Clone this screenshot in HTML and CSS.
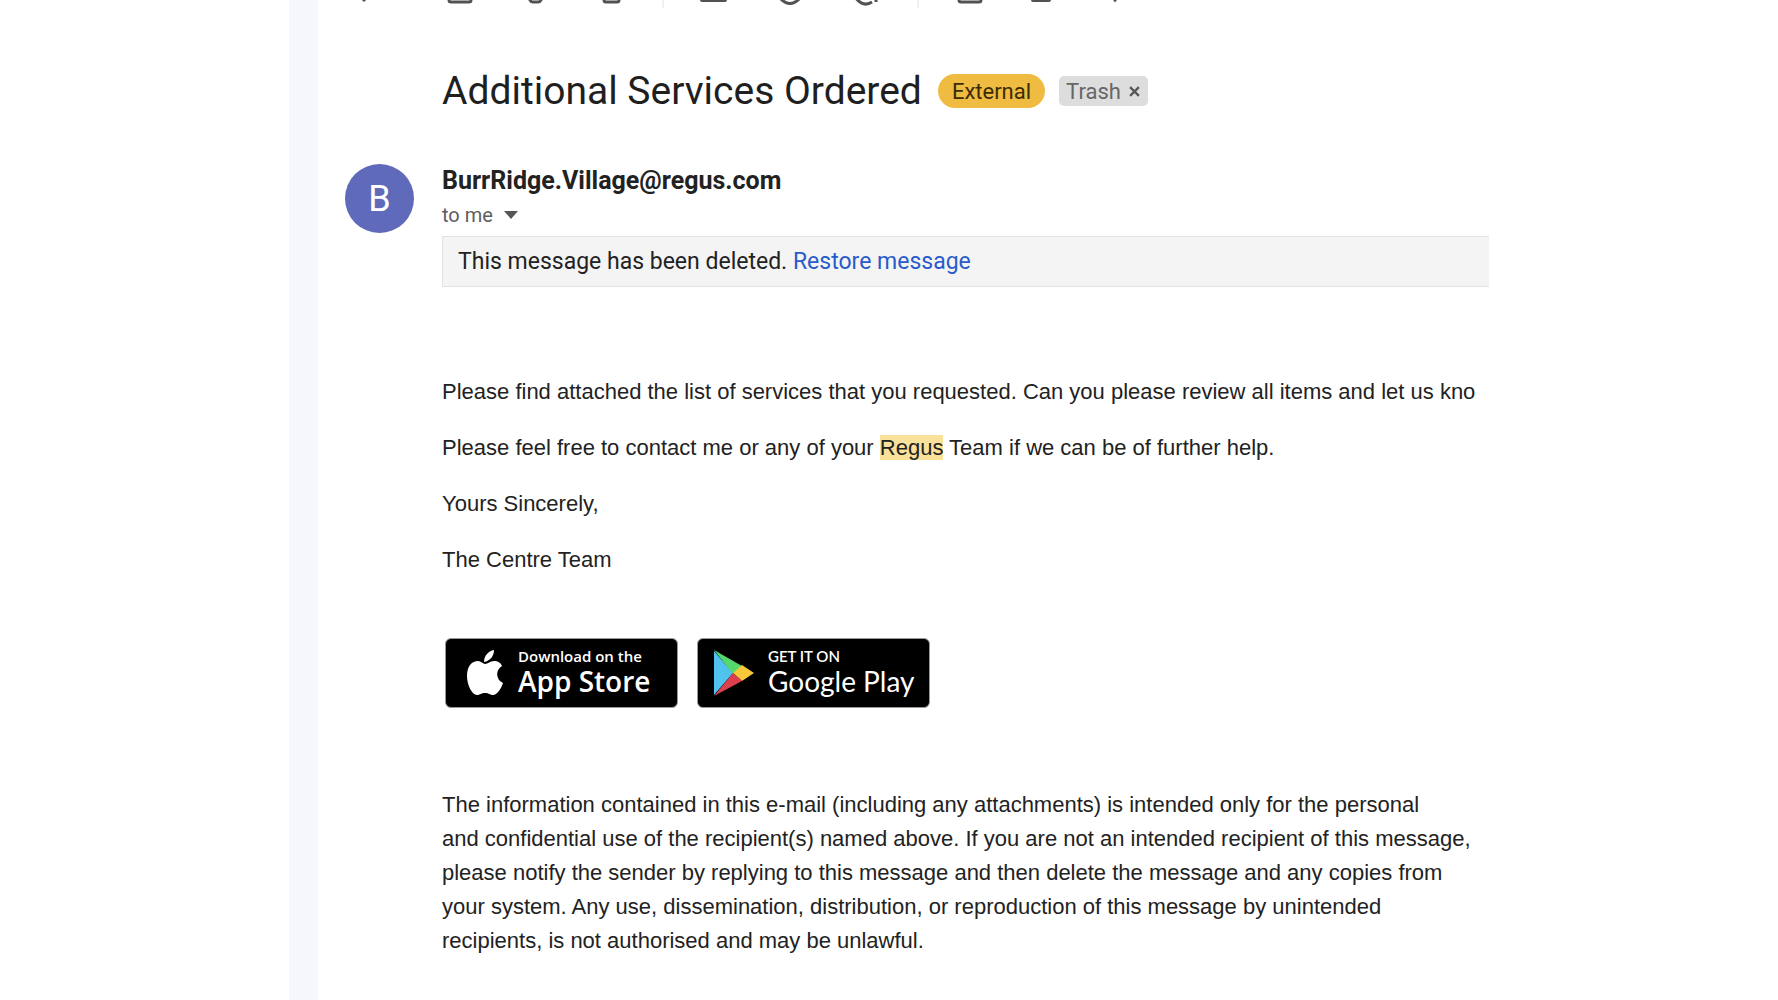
FILE: index.html
```html
<!DOCTYPE html>
<html lang="en">
<head>
  <meta charset="UTF-8" />
  <meta name="viewport" content="width=device-width, initial-scale=1.0">
  <title>Additional Services Ordered</title>
  <link rel="stylesheet" href="styles.css">
</head>
<body>

  <main class="mail">

    <!-- toolbar, scrolled almost out of view -->
    <svg class="toolbar" width="800" height="10" viewBox="0 0 800 10" aria-hidden="true">
      <g fill="none" stroke="#505254" stroke-width="3">
        <path d="M16 -3l3 3l3 -3" />
        <path d="M104 -4v4q0 2 2 2h18q2 0 2-2v-4" />
        <path d="M183 -4l2 4q1 2 3 2h5q2 0 3-2l2-4" />
        <path d="M259 -4v4q0 2 2 2h11q2 0 2-2v-4" />
        <path d="M434 -3q11 13 22 0" />
        <path d="M510 -3q8 11 17 5M531 -4v6" />
        <path d="M614 -4v4q0 2 2 2h18q2 0 2-2v-4" />
        <path d="M767 -4l3 4l3 -4" />
      </g>
      <path d="M355 -2h27v2q0 2-2 2h-23q-2 0-2-2zM686 -2h20v2q0 2-2 2h-16q-2 0-2-2z" fill="#505254" />
      <path d="M318 0v8M573 0v8" stroke="#eff0f2" stroke-width="2" />
    </svg>

    <header class="subject">
      <h1>Additional Services Ordered</h1>
      <span class="tag external">External</span>
      <span class="tag trash">Trash
        <button type="button" aria-label="Remove label Trash">
          <svg width="11" height="11" viewBox="0 0 10 10"><path d="M1 1l8 8M9 1l-8 8" stroke="#555" stroke-width="2" /></svg>
        </button>
      </span>
    </header>

    <section class="sender">
      <div class="avatar">B</div>
      <div class="details">
        <h2>BurrRidge.Village@regus.com</h2>
        <button type="button" class="to">to me
          <svg width="14" height="8" viewBox="0 0 14 8"><path d="M0 0h14l-7 8z" fill="#555" /></svg>
        </button>
        <div class="notice">This message has been deleted. <a href="#">Restore message</a></div>
      </div>
    </section>

    <article class="message">
      <p class="cut">Please find attached the list of services that you requested. Can you please review all items and let us kno</p>
      <p>Please feel free to contact me or any of your <mark>Regus</mark> Team if we can be of further help.</p>
      <p>Yours Sincerely,</p>
      <p>The Centre Team</p>

      <div class="stores">
        <a href="#" class="store apple">
          <svg width="38" height="46" viewBox="0 0 38 46" fill="#fff">
            <path d="M18 12C18 6 22 1 28 0C28 6 24 11 18 12Z" />
            <path d="M19 14C22 14 24 11 28 11C32 11 35 13 36 16C29 20 30 30 37 33C35 39 31 45 27 45C24 45 23 43 19 43C15 43 14 45 11 45C6 45 1 35 1 26C1 16 6 11 12 11C15 11 17 14 19 14Z" />
          </svg>
          <span><small>Download on the</small><b>App Store</b></span>
        </a>
        <a href="#" class="store google">
          <svg width="40" height="46" viewBox="0 0 40 46">
            <path d="M0 1v44l19-22z" fill="#4fc3ee" />
            <path d="M0 0l28 16l-9 8z" fill="#55d86c" />
            <path d="M28 15l12 8l-12 8l-9-8z" fill="#f8c73a" />
            <path d="M0 46l19-23l9 8z" fill="#dc3f4d" />
          </svg>
          <span><small>GET IT ON</small><b>Google Play</b></span>
        </a>
      </div>

      <p class="disclaimer">The information contained in this e-mail (including any attachments) is intended only for the personal<br>
        and confidential use of the recipient(s) named above. If you are not an intended recipient of this message,<br>
        please notify the sender by replying to this message and then delete the message and any copies from<br>
        your system. Any use, dissemination, distribution, or reproduction of this message by unintended<br>
        recipients, is not authorised and may be unlawful.</p>
    </article>

  </main>

</body>
</html>
```
FILE: styles.css
```css
* {
  box-sizing: border-box;
}

body {
  margin: 0;
  background: #fff;
  color: #222;
  font-family: Roboto, "Liberation Sans", sans-serif;
  font-size: 22px;
}

button {
  padding: 0;
  border: none;
  background: none;
  font: inherit;
  color: inherit;
  cursor: pointer;
}

h1, h2, p {
  margin: 0;
}

.mail {
  max-width: 1200px;
  min-height: 100vh;
  margin: 0 auto;
  padding-left: 27px;
  border-left: 29px solid #f5f7fc;
  overflow: hidden;
}

.toolbar {
  display: block;
}

.subject {
  display: flex;
  align-items: center;
  padding: 58px 0 0 97px;
}

h1 {
  margin-right: 16px;
  font-size: 39px;
  line-height: 46px;
  font-weight: 400;
  color: #1f1f1f;
}

.tag {
  display: flex;
  align-items: center;
  font-size: 22px;
}

.external {
  height: 34px;
  margin-right: 14px;
  padding: 0 14px;
  border-radius: 17px;
  background: #efbb41;
  color: #3a2c05;
}

.trash {
  gap: 8px;
  height: 30px;
  padding: 0 8px 0 7px;
  border-radius: 5px;
  background: #ddd;
  color: #666;
}

.trash button, .trash svg {
  display: block;
}

.sender {
  display: flex;
  gap: 28px;
  padding-top: 50px;
}

.avatar {
  flex: none;
  width: 69px;
  height: 69px;
  border-radius: 50%;
  background: #5f6aba;
  color: #fff;
  font-size: 36px;
  line-height: 70px;
  text-align: center;
}

.details {
  flex: 1;
}

h2 {
  font-size: 25px;
  line-height: 34px;
  font-weight: 700;
}

.to {
  display: flex;
  align-items: center;
  gap: 11px;
  height: 34px;
  color: #5e5e5e;
  font-size: 20px;
}

.notice {
  margin-top: 4px;
  padding: 0 15px;
  border: 1px solid #e3e3e3;
  border-right: none;
  background: #f4f4f4;
  font-size: 23px;
  line-height: 49px;
}

.notice a {
  color: #2a5bcb;
  text-decoration: none;
}

.message {
  padding: 88px 0 40px 97px;
  font-family: "Liberation Sans", Arial, sans-serif;
  line-height: 34px;
}

.message p {
  margin-bottom: 22px;
}

.message .cut, .disclaimer {
  white-space: nowrap;
}

mark {
  background: #fae19a;
  color: inherit;
}

.stores {
  display: flex;
  gap: 19px;
  padding: 39px 0 80px 3px;
}

.store {
  display: flex;
  align-items: center;
  width: 233px;
  height: 70px;
  border: 1px solid #999;
  border-radius: 6px;
  background: #000;
  color: #fff;
  text-decoration: none;
}

.store small, .store b {
  display: block;
}

.apple {
  gap: 14px;
  padding-left: 20px;
  font-family: "Open Sans", sans-serif;
}

.google {
  gap: 14px;
  padding-left: 16px;
  font-family: Lato, sans-serif;
}

.store small {
  font-size: 15px;
  line-height: 20px;
  font-weight: 600;
}

.store b {
  padding-bottom: 4px;
  font-size: 28px;
  line-height: 30px;
  font-weight: 600;
  white-space: nowrap;
}

.google b {
  font-weight: 400;
}
```
